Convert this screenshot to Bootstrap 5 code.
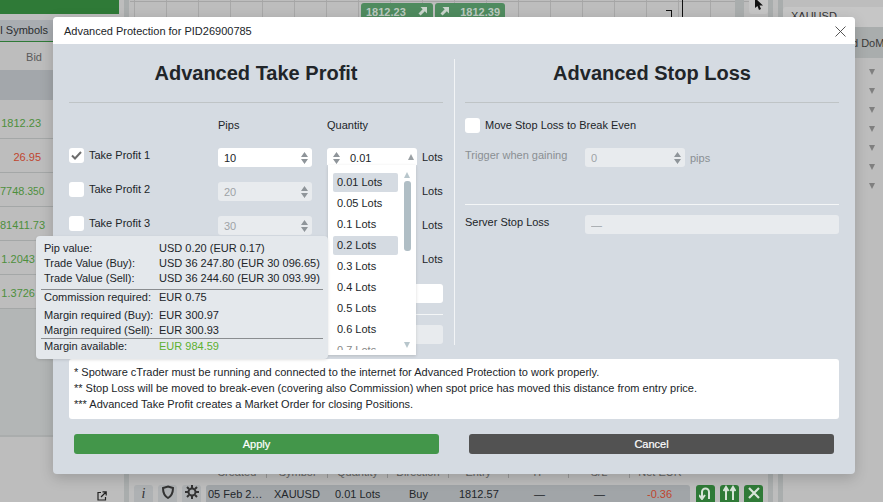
<!DOCTYPE html>
<html lang="en">
<head>
    <meta charset="UTF-8">
    <title>Advanced Protection</title>
    <meta name="viewport" content="width=device-width, initial-scale=1">
    <link href="https://cdn.jsdelivr.net/npm/bootstrap@5.3.3/dist/css/bootstrap.min.css" rel="stylesheet">
    <style>
        html, body { height: 502px; overflow: hidden; }
        body { background: #bdbdbd; font: 11px/13px "Liberation Sans", Arial, sans-serif; color: #212529; }
        /* platform behind the dialog */
        .app { height: 502px; }
        .side-left { width: 119px; flex: none; }
        .top-green { height: 14px; background: #2f7a37; }
        .tab-strip { height: 22px; margin-top: 6px; background: #a9adb1; border-bottom: 1px solid #2f7a37; text-align: right; padding: 4px 71px 0 0; color: #2a2d30; white-space: nowrap; }
        .bid-head { height: 28px; text-align: right; padding: 9px 77px 0 0; color: #5a5a5a; }
        .quote-hi { height: 30px; background: #a3a7ab; }
        .quote { height: 34px; border-bottom: 1px solid #a4a7a7; text-align: right; padding: 12px 78px 0 0; color: #4d8f3c; white-space: nowrap; }
        .quote-first { height: 39px; padding-top: 17px; }
        .quote-red { color: #c0452e; }
        .quote-tail { font-size: 10px; }
        .quote-fx { padding-right: 84px; }
        .side-rest { height: 128px; background: #b3b6b6; border-bottom: 2px solid #aaadad; }
        .ext-link { padding: 52px 12px 0 0; }
        .gap-five { width: 5px; flex: none; }
        .gap-one { width: 1px; flex: none; }
        .strip { width: 5px; flex: none; background: #a9adad; }
        .center-col { width: 638px; flex: none; }
        .chart-top { height: 462px; background-color: #bdbdbd; background-image: linear-gradient(#a5a5a5, #a5a5a5), repeating-linear-gradient(90deg, #a8a8a8 0 1px, transparent 1px 32px); background-size: 100% 1px, 100% 100%; background-repeat: no-repeat; background-position: 0 1px, 4px 0; padding: 3px 0 0 231px; position: relative; }
        .price-btn { height: 24px; width: 72px; background: #4f8b5f; color: #bcc9c0; font-weight: 700; border-radius: 3px 3px 0 0; padding: 3px 5px; }
        .price-btn-sell { width: 70px; margin-left: 2px; }
        .crosshair { position: absolute; left: 552px; top: 0; width: 1px; height: 17px; background: #111; }
        .crosshair-tick { position: absolute; left: 536px; top: 10px; width: 6px; height: 7px; border: solid #111; border-width: 1px 1px 0 0; }
        .chart-edge { position: absolute; left: 605px; top: 0; width: 9px; height: 17px; background: #a9adad; }
        .pos-head { height: 23px; color: #666; padding-left: 77px; }
        .pos-head span { width: 60.4px; flex: none; text-align: center; border-right: 1px solid #999; height: 16px; padding-top: 4px; overflow: hidden; white-space: nowrap; }
        .pos-row { height: 17px; padding-left: 4px; gap: 5px; }
        .tool-btn { width: 19px; height: 17px; background: #aeb1b3; border-radius: 3px 3px 0 0; color: #333; }
        .tool-i { font: italic 400 14px/17px "Liberation Serif", serif; }
        .pos-cells { width: 484px; height: 17px; background: #a1a5a8; border-radius: 3px 3px 0 0; color: #23272b; padding-top: 3px; margin-right: 1px; }
        .pos-cells span { flex: none; }
        .c-date { width: 68px; padding-left: 2px; }
        .c-sym { width: 61px; }
        .c-qty { width: 74px; }
        .c-dir { width: 50px; }
        .c-entry { width: 75px; }
        .c-tp { width: 60px; }
        .c-sl { width: 53px; }
        .c-net { color: #c0452e; }
        .act-btn { width: 19px; height: 17px; background: #2f7a37; border-radius: 3px 3px 0 0; }
        .side-right { flex: 1; min-width: 0; border-left: 5px solid #a9adad; margin-left: 5px; padding-top: 7px; }
        .sym-tab { height: 20px; background: #c6c6c6; padding: 3px 8px; color: #333; border-radius: 3px 0 0 0; }
        .dom-tab { height: 31px; background: #a9adad; padding: 10px 0 0 69px; white-space: nowrap; overflow: hidden; color: #3a3a3a; }
        .tri-list { padding: 11px 8px 0 0; gap: 13px; }
        .tri-down { width: 0; height: 0; border: solid transparent; border-width: 6px 3.5px 0; border-top-color: #7f7f7f; }
        .cursor-btn { position: absolute; left: 749px; top: 0; width: 19px; height: 14px; background: #c6c6c6; border-radius: 0 0 3px 3px; line-height: 0; }

        /* dialog */
        .dlg { position: absolute; left: 53px; top: 17px; width: 802px; height: 457px; border: 0; border-radius: 4px; overflow: hidden; background: #d5dbe2; box-shadow: 0 4px 14px rgba(0,0,0,.18); }
        .dlg-head { height: 27px; background: #fff; padding: 8px 0 0 11px; }
        .dlg-close { position: absolute; right: 9px; top: 9px; width: 11px; height: 11px; padding: 0; border: 0; background: none; line-height: 0; }
        .dlg-body { padding: 0 16px; }
        .pane { width: 374px; padding-top: 15px; }
        .pane-line { width: 1px; height: 286px; margin: 15px 10px 0 11px; background: #f2f4f6; }
        .pane-title { font: 700 20px/24px "Liberation Sans", Arial, sans-serif; height: 43px; margin: 0; padding-top: 2px; text-align: center; color: #212529; }
        .rule-grey { height: 1px; background: #bfc4c6; margin-bottom: 15px; }
        .rule-white { height: 1px; background: #f4f6f7; }
        .tp-head { height: 30px; padding-top: 1px; }
        .tp-row { height: 34px; }
        .col-name { width: 149px; flex: none; }
        .col-pips { width: 94px; flex: none; margin-right: 15px; }
        .col-qty { width: 90px; flex: none; margin-right: 5px; }
        .box-check { width: 15px; height: 15px; flex: none; background: #fff; border-radius: 3px; margin-right: 5px; line-height: 0; }
        .txt-nudge { padding-top: 1px; }
        .fld { height: 19px; }
        .fld .form-control { height: 19px; min-height: 0; padding: 1px 6px 0; font: 11px/18px "Liberation Sans", Arial, sans-serif; border: 0; border-radius: 3px; background: #fff; color: #212529; box-shadow: none; }
        .fld .form-control:disabled { background: #e8ebee; color: #9ea3a7; opacity: 1; }
        .spin { position: absolute; right: 4px; top: 4px; width: 7px; height: 12px; }
        .qty-top { height: 17px; background: #fff; border-radius: 3px 3px 0 0; width: 90px; padding: 4px 0 0 23px; }
        .qty-up { position: absolute; right: 3px; top: 6px; width: 0; height: 0; border: solid transparent; border-width: 0 3.5px 6px; border-bottom-color: #9aa0a4; }
        .qty-spin { position: absolute; left: 6px; top: 4px; width: 7px; height: 12px; }
        .row-unit { padding-top: 3px; }
        .txt-off { color: #8a8f93; }
        .sl-check { height: 30px; }
        .sl-trigger { height: 56px; }
        .sl-key { width: 120px; flex: none; }
        .sl-input { width: 100px; }
        .sl-unit { padding: 4px 0 0 5px; }
        .sl-rule { margin-bottom: 10px; }
        .tp-rule { margin-top: 11px; }
        .tp-last { margin-top: 10px; }

        /* quantity list and tooltip, both over the form */
        .qty-list { position: absolute; left: 275px; top: 148px; width: 88px; height: 190px; background: #fff; box-shadow: 0 1px 3px rgba(0,0,0,.15); }
        .qty-items { position: absolute; left: 5px; top: 8px; width: 65px; height: 177px; overflow: hidden; margin: 0; padding: 0; list-style: none; }
        .qty-items li { height: 19px; line-height: 19px; margin-bottom: 2px; padding-left: 4px; border-radius: 2px; }
        .qty-items li.on { background: #d5dbe2; }
        .qty-items li.fade-out { color: #888; }
        .scroll-thumb { position: absolute; left: 76px; top: 16px; width: 7px; height: 70px; background: #b0bec5; border-radius: 3px; }
        .scroll-up { position: absolute; left: 76px; top: 7px; width: 0; height: 0; border: solid transparent; border-width: 0 3.5px 6px; border-bottom-color: #b8c6cc; }
        .scroll-down { position: absolute; left: 76px; top: 177px; width: 0; height: 0; border: solid transparent; border-width: 6px 3.5px 0; border-top-color: #b8c6cc; }
        .pip-tip { position: absolute; left: 36px; top: 236px; width: 292px; height: 123px; background: #e4e8ec; border-radius: 4px; padding: 5px 5px 0; z-index: 2; box-shadow: 0 1px 3px rgba(0,0,0,.12); }
        .tip-row { height: 15px; line-height: 15px; padding-left: 3px; white-space: nowrap; }
        .tip-row-gap { margin-top: 3px; }
        .tip-key { width: 115px; flex: none; }
        .tip-line { height: 1px; background: #8a8d90; margin-top: 3px; }
        .tip-line-tight { margin-top: 0; }
        .tip-good { color: #5cb030; }
        .notes { height: 60px; background: #fff; border-radius: 3px; padding: 5px; line-height: 16px; position: absolute; left: 16px; top: 342px; width: 770px; }
        .foot-btns { position: absolute; left: 21px; top: 417px; width: 760px; gap: 30px; }
        .foot-btns .btn { flex: 1; height: 20px; padding: 0; font: 400 11px/20px "Liberation Sans", Arial, sans-serif; color: #fff; border: 0; border-radius: 3px; -webkit-text-stroke: .2px #fff; }
        .foot-btns .btn-apply { background: #43964a; }
        .foot-btns .btn-cancel { background: #525252; }
    </style>
</head>
<body>
    <svg width="0" height="0" class="position-absolute">
        <symbol id="spin-arrows" viewBox="0 0 7 12">
            <path d="M3.500 0 7 5H0zM0 7h7l-3.500 5z" fill="#8f959a"/>
        </symbol>
        <symbol id="price-arrow" viewBox="0 0 10 10">
            <path d="M2.500 1H9v6.500L6.800 5.300 2.600 9.500.5 7.400l4.200-4.200z" fill="#c9d5cc"/>
        </symbol>
    </svg>

    <!-- platform behind the dialog -->
    <div class="app d-flex">
        <div class="side-left">
            <div class="top-green"></div>
            <div class="tab-strip">l Symbols</div>
            <div class="bid-head">Bid</div>
            <div class="quote-hi"></div>
            <div class="quote quote-first">1812.23</div>
            <div class="quote quote-red">26.95</div>
            <div class="quote">7748.<span class="quote-tail">350</span></div>
            <div class="quote">81411.73</div>
            <div class="quote quote-fx">1.2043</div>
            <div class="quote quote-fx">1.3726</div>
            <div class="side-rest"></div>
            <div class="ext-link text-end">
                <svg width="10" height="10" viewBox="0 0 10 10" fill="none" stroke="#222" stroke-width="1.200"><path d="M4 1.500H1v7.500h7.500V6M5.500 .8h3.700v3.700M9 1 4 6"/></svg>
            </div>
        </div>
        <div class="gap-five"></div>
        <div class="strip"></div>
        <div class="gap-one"></div>
        <div class="center-col d-flex flex-column">
            <div class="chart-top d-flex align-items-start">
                <div class="price-btn d-flex justify-content-between"><span>1812.23</span><svg width="10" height="10"><use href="#price-arrow"/></svg></div>
                <div class="price-btn price-btn-sell d-flex justify-content-between"><svg width="10" height="10"><use href="#price-arrow"/></svg><span>1812.39</span></div>
                <div class="crosshair"></div>
                <div class="crosshair-tick"></div>
                <div class="chart-edge"></div>
            </div>
            <div class="pos-head d-flex">
                <span>Created</span>
                <span>Symbol</span>
                <span>Quantity</span>
                <span>Direction</span>
                <span>Entry</span>
                <span>TP</span>
                <span>S/L</span>
                <span class="border-0">Net EUR</span>
            </div>
            <div class="pos-row d-flex">
                <div class="tool-btn tool-i text-center">i</div>
                <div class="tool-btn text-center">
                    <svg width="12" height="14" viewBox="0 0 12 14" fill="none" stroke="#333" stroke-width="2"><path d="M6 1.500 11 3c0 5-1.500 8-5 10C2.500 11 1 8 1 3z"/></svg>
                </div>
                <div class="tool-btn text-center">
                    <svg width="14" height="14" viewBox="0 0 14 14" fill="none" stroke="#333" stroke-width="2"><circle cx="7" cy="7" r="3.500"/><path d="M7 0v3M7 11v3M0 7h3M11 7h3M2 2l2 2M10 10l2 2M2 12l2-2M10 4l2-2"/></svg>
                </div>
                <div class="pos-cells d-flex">
                    <span class="c-date">05 Feb 2…</span>
                    <span class="c-sym">XAUUSD</span>
                    <span class="c-qty">0.01 Lots</span>
                    <span class="c-dir">Buy</span>
                    <span class="c-entry">1812.57</span>
                    <span class="c-tp">—</span>
                    <span class="c-sl">—</span>
                    <span class="c-net">-0.36</span>
                </div>
                <div class="act-btn text-center"><svg width="13" height="15" viewBox="0 0 13 15" fill="none" stroke="#d7e4d8" stroke-width="2"><path d="M3 14V7a3.500 3.500 0 0 1 7 0v7M0 10l3 4 3-4"/></svg></div>
                <div class="act-btn text-center"><svg width="13" height="15" viewBox="0 0 13 15" fill="none" stroke="#d7e4d8" stroke-width="2"><path d="M3 15V4M10 15V4M.5 6 3 2l2.500 4M7.500 6 10 2l2.500 4"/></svg></div>
                <div class="act-btn text-center"><svg width="12" height="15" viewBox="0 0 12 15" fill="none" stroke="#d7e4d8" stroke-width="2.200"><path d="m1 3 10 10M11 3 1 13"/></svg></div>
            </div>
        </div>
        <div class="strip"></div>
        <div class="side-right">
            <div class="sym-tab">XAUUSD</div>
            <div class="dom-tab">d DoM</div>
            <div class="tri-list d-flex flex-column align-items-end">
                <div class="tri-down"></div><div class="tri-down"></div><div class="tri-down"></div><div class="tri-down"></div><div class="tri-down"></div><div class="tri-down"></div><div class="tri-down"></div>
            </div>
        </div>
    </div>
    <div class="cursor-btn text-center">
        <svg width="8" height="10" viewBox="1 2 8 10"><path d="M1 0v10l2.500-2 1.500 4 2-1-1.500-3.500H9z" fill="#111"/></svg>
    </div>

    <!-- dialog -->
    <div class="dlg card">
        <div class="dlg-head">Advanced Protection for PID26900785</div>
        <button class="dlg-close" aria-label="Close">
            <svg width="11" height="11" viewBox="0 0 11 11" fill="none" stroke="#444" stroke-width=".9"><path d="m.5 .5 10 10M10.500 .5l-10 10"/></svg>
        </button>
        <div class="dlg-body d-flex">
            <div class="pane">
                <h2 class="pane-title">Advanced Take Profit</h2>
                <div class="rule-grey"></div>
                <div class="tp-head d-flex">
                    <div class="col-name"></div>
                    <div class="col-pips">Pips</div>
                    <div class="col-qty">Quantity</div>
                </div>
                <div class="tp-row d-flex">
                    <div class="col-name d-flex">
                        <span class="box-check d-flex align-items-center justify-content-center">
                            <svg width="11" height="9" viewBox="0 0 11 9" fill="none" stroke="#6d6d6d" stroke-width="2"><path d="m1 4.500 3 3L10 1"/></svg>
                        </span>
                        <span class="txt-nudge">Take Profit 1</span>
                    </div>
                    <div class="col-pips fld position-relative">
                        <input class="form-control" value="10">
                        <svg class="spin"><use href="#spin-arrows"/></svg>
                    </div>
                    <div class="col-qty position-relative">
                        <div class="qty-top">0.01</div>
                        <svg class="qty-spin"><use href="#spin-arrows"/></svg>
                        <span class="qty-up"></span>
                    </div>
                    <div class="row-unit">Lots</div>
                </div>
                <div class="tp-row d-flex">
                    <div class="col-name d-flex"><span class="box-check"></span><span class="txt-nudge">Take Profit 2</span></div>
                    <div class="col-pips fld position-relative">
                        <input class="form-control" value="20" disabled>
                        <svg class="spin"><use href="#spin-arrows"/></svg>
                    </div>
                    <div class="col-qty"></div>
                    <div class="row-unit">Lots</div>
                </div>
                <div class="tp-row d-flex">
                    <div class="col-name d-flex"><span class="box-check"></span><span class="txt-nudge">Take Profit 3</span></div>
                    <div class="col-pips fld position-relative">
                        <input class="form-control" value="30" disabled>
                        <svg class="spin"><use href="#spin-arrows"/></svg>
                    </div>
                    <div class="col-qty"></div>
                    <div class="row-unit">Lots</div>
                </div>
                <div class="tp-row d-flex">
                    <div class="col-name d-flex"><span class="box-check"></span><span class="txt-nudge">Take Profit 4</span></div>
                    <div class="col-pips fld position-relative">
                        <input class="form-control" value="40" disabled>
                    </div>
                    <div class="col-qty"></div>
                    <div class="row-unit">Lots</div>
                </div>
                <div class="d-flex fld">
                    <div class="col-name"></div>
                    <div class="flex-grow-1"><input class="form-control" value=""></div>
                </div>
                <div class="rule-white tp-rule"></div>
                <div class="d-flex fld tp-last">
                    <div class="col-name"></div>
                    <div class="flex-grow-1"><input class="form-control" value="" disabled></div>
                </div>
            </div>
            <div class="pane-line"></div>
            <div class="pane">
                <h2 class="pane-title">Advanced Stop Loss</h2>
                <div class="rule-grey"></div>
                <div class="d-flex sl-check">
                    <span class="box-check"></span><span class="txt-nudge">Move Stop Loss to Break Even</span>
                </div>
                <div class="d-flex sl-trigger">
                    <div class="txt-off sl-key txt-nudge">Trigger when gaining</div>
                    <div class="fld position-relative sl-input">
                        <input class="form-control" value="0" disabled>
                        <svg class="spin"><use href="#spin-arrows"/></svg>
                    </div>
                    <div class="txt-off sl-unit">pips</div>
                </div>
                <div class="rule-white sl-rule"></div>
                <div class="d-flex">
                    <div class="sl-key txt-nudge">Server Stop Loss</div>
                    <div class="fld flex-grow-1"><input class="form-control" value="—" disabled></div>
                </div>
            </div>
        </div>
        <div class="notes">
            * Spotware cTrader must be running and connected to the internet for Advanced Protection to work properly.<br>
            ** Stop Loss will be moved to break-even (covering also Commission) when spot price has moved this distance from entry price.<br>
            *** Advanced Take Profit creates a Market Order for closing Positions.
        </div>
        <div class="foot-btns d-flex">
            <button class="btn btn-apply">Apply</button>
            <button class="btn btn-cancel">Cancel</button>
        </div>
        <div class="qty-list">
            <ul class="qty-items">
                <li class="on">0.01 Lots</li>
                <li>0.05 Lots</li>
                <li>0.1 Lots</li>
                <li class="on">0.2 Lots</li>
                <li>0.3 Lots</li>
                <li>0.4 Lots</li>
                <li>0.5 Lots</li>
                <li>0.6 Lots</li>
                <li class="fade-out">0.7 Lots</li>
            </ul>
            <span class="scroll-up"></span>
            <div class="scroll-thumb"></div>
            <span class="scroll-down"></span>
        </div>
    </div>

    <!-- pip value tooltip -->
    <div class="pip-tip">
        <div class="tip-row d-flex"><span class="tip-key">Pip value:</span><span>USD 0.20 (EUR 0.17)</span></div>
        <div class="tip-row d-flex"><span class="tip-key">Trade Value (Buy):</span><span>USD 36 247.80 (EUR 30 096.65)</span></div>
        <div class="tip-row d-flex"><span class="tip-key">Trade Value (Sell):</span><span>USD 36 244.60 (EUR 30 093.99)</span></div>
        <div class="tip-line"></div>
        <div class="tip-row d-flex"><span class="tip-key">Commission required:</span><span>EUR 0.75</span></div>
        <div class="tip-row tip-row-gap d-flex"><span class="tip-key">Margin required (Buy):</span><span>EUR 300.97</span></div>
        <div class="tip-row d-flex"><span class="tip-key">Margin required (Sell):</span><span>EUR 300.93</span></div>
        <div class="tip-line tip-line-tight"></div>
        <div class="tip-row d-flex"><span class="tip-key">Margin available:</span><span class="tip-good">EUR 984.59</span></div>
    </div>

    <script src="https://cdn.jsdelivr.net/npm/bootstrap@5.3.3/dist/js/bootstrap.bundle.min.js"></script>
</body>
</html>
